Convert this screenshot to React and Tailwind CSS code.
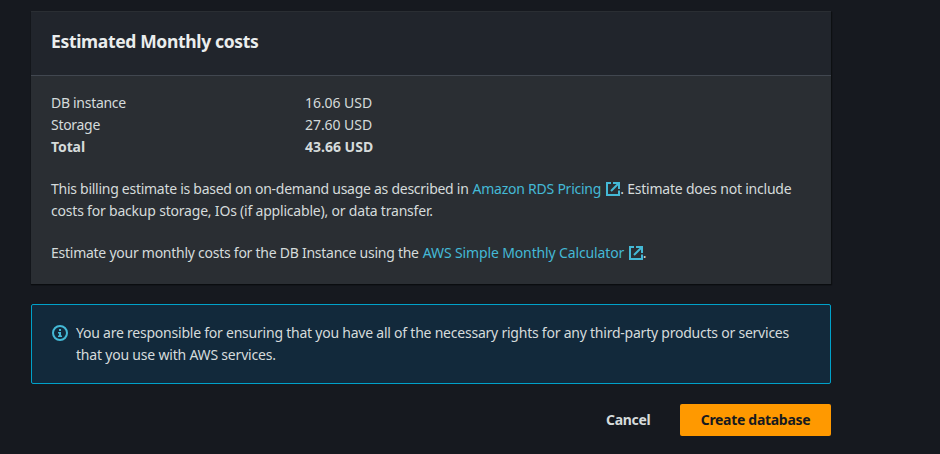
function ExternalIcon() {
  return (
    <svg className="h-[14px] w-[14px] shrink-0 text-[#44b9d6]" viewBox="0 0 14 14" fill="none" stroke="currentColor" strokeWidth="2">
      <path d="M5 1H1v12h12V8.5" />
      <path d="M7 1h6v6M13 1L5 9" />
    </svg>
  );
}

function InfoIcon() {
  return (
    <svg className="mt-[3px] h-4 w-4 shrink-0 text-[#44b9d6]" viewBox="0 0 16 16" fill="none" stroke="currentColor">
      <circle cx="8" cy="8" r="7" strokeWidth="2" />
      <path d="M7 5h2" strokeWidth="2" />
      <path d="M6 7.7h3M6 11.3h4" strokeWidth="1.4" />
      <path d="M8 7v4.5" strokeWidth="2" />
    </svg>
  );
}

const costs = [
  ["DB instance", "16.06 USD"],
  ["Storage", "27.60 USD"],
];

export default function App() {
  return (
    <div className="h-[454px] w-[940px] overflow-hidden bg-[#16191f] pl-[31px] pt-[11px] font-['Noto_Sans',sans-serif] text-[14px] leading-[22px] text-[#d5dbdb]">
      <main className="w-[800px] whitespace-nowrap">
        <section className="h-[273px] bg-[#2a2e33] shadow-[0_1px_1px_0_#0a0c0f,1px_1px_1px_0_#0f1114]">
          <header className="flex h-[65px] items-center border-b border-t border-b-[#414750] border-t-[#2a2e33] bg-[#21252c] px-5 pb-[5px]">
            <h2 className="text-[17.5px] font-bold leading-[22px] tracking-[-0.34px] text-[#eaeded]">Estimated Monthly costs</h2>
          </header>
          <div className="px-5 pt-4">
            <dl>
              {costs.map(([label, value]) => (
                <div key={label} className="flex">
                  <dt className="w-[254px] tracking-[-0.3px]">{label}</dt>
                  <dd className="tracking-[-0.05px]">{value}</dd>
                </div>
              ))}
              <div className="flex font-bold">
                <dt className="w-[254px] tracking-[-0.1px]">Total</dt>
                <dd>43.66 USD</dd>
              </div>
            </dl>
            <div className="mt-5">
              <p className="flex items-center">
                <span className="tracking-[-0.27px]">This billing estimate is based on on-demand usage as described in</span>
                <a className="ml-1 flex items-center gap-[5px] tracking-[-0.24px] text-[#44b9d6]">Amazon RDS Pricing<ExternalIcon /></a>
                <span className="tracking-[-0.21px]">. Estimate does not include</span>
              </p>
              <p>
                <span className="tracking-[-0.2px]">costs for backup storage, IOs (if applicable), or data transfer.</span>
              </p>
            </div>
            <p className="mt-5 flex items-center">
              <span className="tracking-[-0.255px]">Estimate your monthly costs for the DB Instance using the</span>
              <a className="ml-1 flex items-center gap-[4.5px] tracking-[-0.13px] text-[#44b9d6]">AWS Simple Monthly Calculator<ExternalIcon /></a>
              <span>.</span>
            </p>
          </div>
        </section>
        <section className="mt-5 flex h-20 gap-2 rounded-[2px] border border-[#00a1c9] bg-[#12293b] px-5 pt-[17px]">
          <InfoIcon />
          <div>
            <p className="tracking-[-0.228px]">You are responsible for ensuring that you have all of the necessary rights for any third-party products or services</p>
            <p className="tracking-[-0.2px]">that you use with AWS services.</p>
          </div>
        </section>
        <footer className="mt-5 flex h-8 items-center justify-end font-bold">
          <button className="mr-[29.5px] tracking-[-0.28px]">Cancel</button>
          <button className="h-8 w-[151px] rounded-[2px] bg-[#ff9900] tracking-[-0.3px] text-[#16191f]">Create database</button>
        </footer>
      </main>
    </div>
  );
}
